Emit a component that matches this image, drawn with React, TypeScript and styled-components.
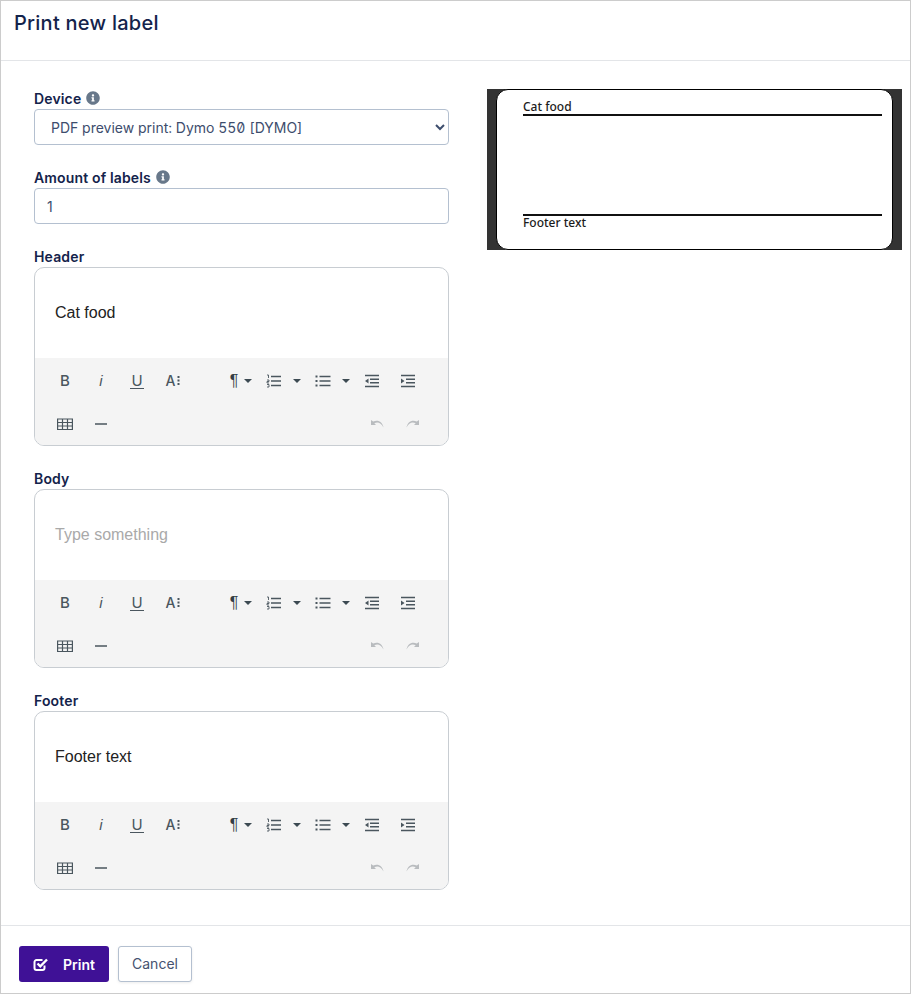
import React from "react";
import styled, { createGlobalStyle } from "styled-components";
import { FaInfoCircle } from "react-icons/fa";

const Global = createGlobalStyle`
  html, body { margin: 0; padding: 0; background: #fff; }
  * { box-sizing: border-box; }
`;

const Frame = styled.div`
  width: 911px;
  height: 994px;
  border: 1px solid #ccc;
  display: flex;
  flex-direction: column;
  font-family: Inter, "Liberation Sans", sans-serif;
  color: #14234b;
  background: #fff;
`;
const Header = styled.header`
  height: 60px;
  padding: 10px 13px 0;
  border-bottom: 1px solid #e3e5e8;
`;
const Title = styled.h1`
  margin: 0;
  font-size: 20px;
  line-height: 24px;
  font-weight: 500;
  letter-spacing: 0.25px;
`;
const Main = styled.main`
  flex: 1;
  display: flex;
  gap: 38px;
  padding: 28px 8px 0 33px;
`;
const Column = styled.div`
  width: 415px;
  display: flex;
  flex-direction: column;
`;
const Field = styled.div<{ $gap: number }>`
  margin-bottom: ${(p) => p.$gap}px;
`;
const Label = styled.label`
  display: flex;
  align-items: center;
  gap: 5px;
  height: 20px;
  padding-bottom: 2px;
  font-size: 14px;
  font-weight: 600;
  letter-spacing: 0.15px;
  color: #14234b;
  svg { color: #68788a; width: 14px; height: 14px; }
`;
const Select = styled.select`
  display: block;
  width: 100%;
  height: 36px;
  padding: 0 12px;
  border: 1px solid #b4c0d0;
  border-radius: 4px;
  background: #fff;
  color: #3d4d6d;
  font-family: Inter, sans-serif;
  font-size: 14px;
  font-feature-settings: "zero", "tnum";
`;
const Input = styled.input`
  display: block;
  width: 100%;
  height: 36px;
  padding: 0 12px;
  border: 1px solid #b4c0d0;
  border-radius: 4px;
  color: #3d4d6d;
  font-family: Inter, sans-serif;
  font-size: 14px;
`;
const Editor = styled.div`
  height: 179px;
  border: 1px solid #c8cdd2;
  border-radius: 10px;
  overflow: hidden;
  display: flex;
  flex-direction: column;
`;
const Content = styled.div<{ $empty?: boolean }>`
  height: 90px;
  flex: none;
  padding: 0 20px;
  display: flex;
  align-items: center;
  font-family: "Liberation Sans", sans-serif;
  font-size: 16px;
  color: ${(p) => (p.$empty ? "#a9a9a9" : "#222")};
`;
const Toolbar = styled.div`
  flex: 1;
  background: #f4f4f4;
  padding: 1px 18px 0 12px;
`;
const Row = styled.div`
  display: flex;
  align-items: center;
  height: 43px;
`;
const Tool = styled.span<{ $w?: number; $off?: boolean; $ml?: number; $auto?: boolean }>`
  width: ${(p) => p.$w ?? 36}px;
  height: 43px;
  flex: none;
  display: flex;
  align-items: center;
  justify-content: center;
  gap: 5px;
  color: ${(p) => (p.$off ? "#b9bcbf" : "#4a565e")};
  margin-left: ${(p) => (p.$auto ? "auto" : `${p.$ml ?? 0}px`)};
`;
const ParaTool = styled(Tool)`
  gap: 6px;
  padding-left: 2px;
`;
const ListTool = styled(Tool)<{ $pad: number }>`
  justify-content: flex-start;
  padding-left: ${(p) => p.$pad}px;
  gap: 11px;
`;
const BoldGlyph = styled.span`
  font-family: Inter, sans-serif;
  font-size: 15px;
  font-weight: 500;
`;
const ItalicGlyph = styled.span`
  font-family: "Liberation Sans", sans-serif;
  font-style: italic;
  font-size: 15px;
`;
const UnderGlyph = styled.span`
  font-family: Inter, sans-serif;
  font-size: 15px;
  line-height: 15px;
  padding: 0 1px;
  border-bottom: 1.5px solid currentColor;
`;
const SizeGlyph = styled.span`
  display: flex;
  align-items: center;
  gap: 2px;
  font-family: Inter, sans-serif;
  font-size: 14px;
  font-weight: 500;
`;
const ParaGlyph = styled.span`
  font-family: "Liberation Sans", sans-serif;
  font-size: 16px;
  color: #333e45;
`;
const Caret = styled.i`
  width: 0;
  height: 0;
  flex: none;
  border-left: 4px solid transparent;
  border-right: 4px solid transparent;
  border-top: 4px solid #3c4a52;
`;
const Preview = styled.div`
  height: 161px;
  background: #333;
  padding: 0 9px;
`;
const LabelCard = styled.div`
  height: 161px;
  background: #fff;
  border: 1px solid #000;
  border-radius: 12px;
  padding: 9px 10px 0 26px;
  font-family: "Noto Sans", sans-serif;
  font-size: 12px;
  font-weight: 500;
  color: #1c1c1c;
  display: flex;
  flex-direction: column;
`;
const LabelHead = styled.div`
  height: 17px;
  line-height: 15px;
  border-bottom: 2px solid #111;
`;
const LabelBody = styled.div`
  height: 98px;
`;
const LabelFoot = styled.div`
  line-height: 14px;
  border-top: 2px solid #111;
`;
const Footer = styled.footer`
  height: 68px;
  border-top: 1px solid #e3e5e8;
  padding: 20px 18px 0;
  display: flex;
  gap: 9px;
  align-items: flex-start;
`;
const PrintButton = styled.button`
  width: 90px;
  height: 36px;
  display: flex;
  align-items: center;
  justify-content: center;
  gap: 14px;
  border: 0;
  border-radius: 3px;
  background: #3f1196;
  color: #fff;
  font-family: Inter, sans-serif;
  font-size: 14px;
  font-weight: 600;
`;
const CancelButton = styled.button`
  width: 74px;
  height: 36px;
  padding: 0 0 2px;
  border: 1px solid #b4c0d0;
  border-radius: 3px;
  background: #fff;
  color: #45526f;
  font-family: Inter, sans-serif;
  font-size: 14px;
  box-shadow: 0 1px 3px rgba(0, 0, 0, 0.08);
`;

const Ico = ({ children, w = 16, h = 14 }: { children: React.ReactNode; w?: number; h?: number }) => (
  <svg width={w} height={h} viewBox={`0 0 ${w} ${h}`} fill="none" stroke="currentColor" strokeWidth="1.2">
    {children}
  </svg>
);
const OlIcon = () => (
  <Ico>
    <path d="M5 2.500h10M5 7h10M5 11.500h10" strokeWidth="1.7" />
    <path d="M1 1h1.500v3M1 6h2v1.500H1V9h2M1 10.500h2V13H1" strokeWidth="0.9" />
  </Ico>
);
const UlIcon = () => (
  <Ico>
    <path d="M4.500 2.500h11M4.500 7h11M4.500 11.500h11" strokeWidth="1.700" />
    <path d="M0.500 2.500h2M0.500 7h2M0.500 11.500h2" strokeWidth="1.900" />
  </Ico>
);
const OutdentIcon = () => (
  <Ico>
    <path d="M1 1.500h14M6 5.200h9M6 8.800h9M1 12.500h14" strokeWidth="1.600" />
    <path d="M4.500 4.500v5L1 7z" fill="currentColor" stroke="none" />
  </Ico>
);
const IndentIcon = () => (
  <Ico>
    <path d="M1 1.500h14M6 5.200h9M6 8.800h9M1 12.500h14" strokeWidth="1.600" />
    <path d="M1 4.500v5L4.500 7z" fill="currentColor" stroke="none" />
  </Ico>
);
const TableIcon = () => (
  <Ico h={12}>
    <path d="M.6 1h14.800v10.500H.6zM.6 4.500h14.800M.6 8h14.800M5.500 1v10.500M10.500 1v10.500" strokeWidth="1.200" />
  </Ico>
);
const DashIcon = () => (
  <Ico w={12} h={4}>
    <path d="M0 2h12" strokeWidth="1.700" />
  </Ico>
);
const UndoIcon = () => (
  <Ico w={15} h={10}>
    <path d="M1 1v5h5L4.300 4.300C7.500 2.500 11 3.500 13.500 8.500 12.500 3 8 .2 3.200 2.600z" fill="currentColor" stroke="none" />
  </Ico>
);
const RedoIcon = () => (
  <Ico w={15} h={10}>
    <path d="M14 1v5H9l1.700-1.700C7.500 2.500 4 3.500 1.500 8.500 2.500 3 7 .2 11.800 2.600z" fill="currentColor" stroke="none" />
  </Ico>
);
const SizeDots = () => (
  <svg width="3" height="9" viewBox="0 0 3 9" fill="currentColor">
    <path d="M.5 0h2v2h-2zM.5 3.500h2v2h-2zM.5 7h2v2h-2z" />
  </svg>
);
const PrintCheck = () => (
  <svg width="16" height="15" viewBox="0 0 16 15" fill="none" stroke="currentColor">
    <path d="M11.500 8.500v2.500a2 2 0 0 1-2 2H3.500a2 2 0 0 1-2-2V5a2 2 0 0 1 2-2h6" strokeWidth="2" />
    <path d="M4.500 6.500L7.300 9.300 14 2.500" strokeWidth="2.400" />
  </svg>
);

const RichEditor = ({ text, placeholder }: { text?: string; placeholder?: string }) => (
  <Editor>
    <Content $empty={!text}>{text ?? placeholder}</Content>
    <Toolbar>
      <Row>
        <Tool><BoldGlyph>B</BoldGlyph></Tool>
        <Tool><ItalicGlyph>i</ItalicGlyph></Tool>
        <Tool><UnderGlyph>U</UnderGlyph></Tool>
        <Tool><SizeGlyph>A<SizeDots /></SizeGlyph></Tool>
        <ParaTool $w={36} $ml={31}><ParaGlyph>¶</ParaGlyph><Caret /></ParaTool>
        <ListTool $w={47} $pad={8}><OlIcon /><Caret /></ListTool>
        <ListTool $w={49} $pad={10}><UlIcon /><Caret /></ListTool>
        <Tool><OutdentIcon /></Tool>
        <Tool><IndentIcon /></Tool>
      </Row>
      <Row>
        <Tool><TableIcon /></Tool>
        <Tool><DashIcon /></Tool>
        <Tool $off $auto><UndoIcon /></Tool>
        <Tool $off $w={35}><RedoIcon /></Tool>
      </Row>
    </Toolbar>
  </Editor>
);

export default function App() {
  return (
    <Frame>
      <Global />
      <Header>
        <Title>Print new label</Title>
      </Header>
      <Main>
        <Column>
          <Field $gap={23}>
            <Label>Device <FaInfoCircle /></Label>
            <Select defaultValue="a">
              <option value="a">PDF preview print: Dymo 550 [DYMO]</option>
            </Select>
          </Field>
          <Field $gap={23}>
            <Label>Amount of labels <FaInfoCircle /></Label>
            <Input defaultValue="1" />
          </Field>
          <Field $gap={23}>
            <Label>Header</Label>
            <RichEditor text="Cat food" />
          </Field>
          <Field $gap={23}>
            <Label>Body</Label>
            <RichEditor placeholder="Type something" />
          </Field>
          <Field $gap={0}>
            <Label>Footer</Label>
            <RichEditor text="Footer text" />
          </Field>
        </Column>
        <Column>
          <Preview>
            <LabelCard>
              <LabelHead>Cat food</LabelHead>
              <LabelBody />
              <LabelFoot>Footer text</LabelFoot>
            </LabelCard>
          </Preview>
        </Column>
      </Main>
      <Footer>
        <PrintButton><PrintCheck /> Print</PrintButton>
        <CancelButton>Cancel</CancelButton>
      </Footer>
    </Frame>
  );
}
